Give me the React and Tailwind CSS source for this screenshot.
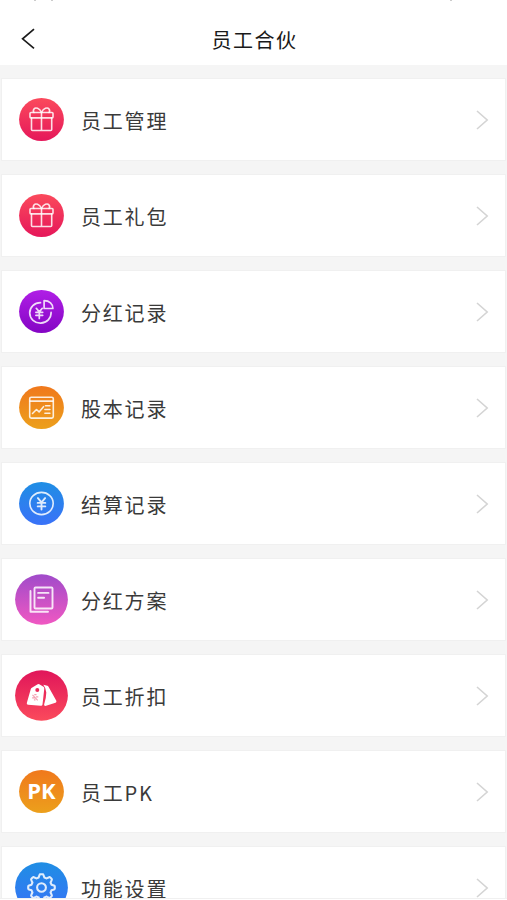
const stroke = {
  fill: "none",
  stroke: "#ffffff",
  strokeOpacity: 0.85,
  strokeWidth: 1.6,
  strokeLinecap: "round",
  strokeLinejoin: "round",
};

// All icons are drawn around the centre of the badge
function GiftIcon() {
  return (
    <g {...stroke}>
      <rect x="-11.5" y="-7" width="23" height="5.4" rx="1" />
      <path d="M-10 -1.6V10Q-10 11 -9 11H9.2Q10.2 11 10.2 10V-1.6M0 -7V11" />
      <path d="M0 -7C-2 -11.5 -6 -12.5 -7.5 -10.5C-8.5 -9 -8 -7.5 -7.5 -7M0 -7C2 -11.5 6 -12.5 7.5 -10.5C8.5 -9 8 -7.5 7.5 -7" />
    </g>
  );
}

function DividendIcon() {
  return (
    <g {...stroke} strokeWidth="1.7">
      <path d="M-1 -8.8A10.7 10.2 0 1 0 9.6 0.9" />
      <path d="M2.6 -10.8V-3H11.4C11.4 -7.5 8 -10.8 2.6 -10.8Z" />
      <path d="M-5.2 -3.2L-2.2 0.4L0.8 -3.2M-2.2 0.4V7M-5.6 0.8H1.2M-5.6 3.8H1.2" />
    </g>
  );
}

function StockIcon() {
  return (
    <g {...stroke}>
      <rect x="-11.8" y="-10.2" width="23.6" height="20.8" rx="1.5" />
      <path d="M-11.5 -6.4H11.5" />
      <path d="M-9 6L-5 2L-2.4 4.4L2 -0.8M4 -1.8H8.4M3.4 2H8.4M3.4 5.8H8.4" />
    </g>
  );
}

function SettleIcon() {
  return (
    <g {...stroke}>
      <ellipse rx="11.7" ry="11.1" />
      <path strokeWidth="1.9" d="M-3.6 -5.4L0 -1.2L3.6 -5.4M0 -1.2V6M-3.8 -0.6H3.8M-3.8 2.9H3.8" />
    </g>
  );
}

function PlanIcon() {
  return (
    <g {...stroke} strokeWidth="1.9">
      <rect x="-7" y="-12" width="18" height="21" rx="1" />
      <path d="M-11 -8.5V12.2H6.5M-3.4 -6.6H7M-3.4 -1.8H2.6" />
    </g>
  );
}

function DiscountIcon() {
  return (
    <g>
      <path
        fill="#ffffff"
        fillRule="evenodd"
        d="M-9.6 -7.8L-3.8 -11.2Q-3 -11.7 -2.2 -11.2L2 -8.8Q2.9 -8.2 2.8 -7L1 9Q0.8 10.4 -0.8 10.2L-13.4 9.3Q-15.1 9 -14.7 7.4L-10.7 -6.6Q-10.4 -7.4 -9.6 -7.8ZM-4.2 -7.4A2 2 0 1 0 -4.2 -3.4A2 2 0 1 0 -4.2 -7.4Z"
      />
      <path
        fill="#ffffff"
        d="M1.8 -10.8L5.8 -9.8Q6.6 -9.6 7 -8.8L14.8 5.2Q15.4 6.6 14 7.2L4.6 10.3Q2.4 10.8 2.6 9Q4.8 2.4 4.8 -3Q4.6 -7.4 1.8 -10.8Z"
      />
      <path fill="none" stroke="#f3a0b2" strokeWidth="1.2" d="M-9 -0.6L-3.8 4.8M-7.2 -0.8H-5M-9.4 2.4H-6.8M-5.6 1.4H-3.2M-7.6 4.4H-6" />
    </g>
  );
}

function PkIcon() {
  return (
    <text
      y="7.7"
      textAnchor="middle"
      fill="#ffffff"
      className="font-['Open_Sans','Noto_Sans',sans-serif] text-[22px] font-bold"
    >
      PK
    </text>
  );
}

// Eight rounded teeth, the first one pointing up
const gearPoints = Array.from({ length: 160 }, (_, i) => {
  const angle = (i / 160) * Math.PI * 2;
  const wave = Math.max(-1, Math.min(1, 1.6 * Math.cos(8 * angle)));
  const radius = 11.8 + 1.5 * wave;
  return `${(radius * Math.sin(angle)).toFixed(2)},${(-radius * Math.cos(angle)).toFixed(2)}`;
}).join(" ");

function GearIcon() {
  return (
    <g {...stroke} strokeWidth="2.1">
      <polygon points={gearPoints} />
      <ellipse rx="4.4" ry="4.2" />
    </g>
  );
}

const menu = [
  { label: "员工管理", from: "#fb4a5c", to: "#e5175a", Icon: GiftIcon },
  { label: "员工礼包", from: "#fb4a5c", to: "#e5175a", Icon: GiftIcon },
  { label: "分红记录", from: "#b01fe6", to: "#8405c4", Icon: DividendIcon },
  { label: "股本记录", from: "#f0781c", to: "#eca01c", Icon: StockIcon },
  { label: "结算记录", from: "#1f8ee4", to: "#3a72f8", Icon: SettleIcon },
  { label: "分红方案", from: "#a04bca", to: "#f058c2", Icon: PlanIcon, large: true },
  { label: "员工折扣", from: "#e0155a", to: "#fb4a5c", Icon: DiscountIcon, large: true },
  { label: "员工PK", from: "#f0781c", to: "#eca01c", Icon: PkIcon },
  { label: "功能设置", from: "#1f8ee4", to: "#3a72f8", Icon: GearIcon, large: true },
];

function Badge({ id, from, to, large, Icon }) {
  return (
    <svg viewBox="-26.5 -26.5 54 54" className="h-[54px] w-[54px] shrink-0">
      <defs>
        <linearGradient id={id} x1="0" y1="0" x2="0" y2="1">
          <stop offset="0" stopColor={from} />
          <stop offset="1" stopColor={to} />
        </linearGradient>
      </defs>
      <ellipse rx={large ? 26.4 : 22.4} ry={large ? 25.3 : 21.6} fill={`url(#${id})`} />
      <Icon />
    </svg>
  );
}

function MenuRow({ item, id }) {
  return (
    <div className="mx-px flex h-[83px] shrink-0 items-center border border-[#f0f0f0] bg-white pl-[13px] pr-4">
      <Badge id={id} {...item} />
      <span className="ml-3 flex-1 pt-[2px] text-[20px] leading-5 tracking-[1.8px] text-[#3a3a3a]">
        {item.label}
      </span>
      <svg viewBox="0 0 14 22" className="h-[22px] w-[14px]">
        <path d="M2 2L12.2 11L2 20" fill="none" stroke="#d4d4d4" strokeWidth="1.6" />
      </svg>
    </div>
  );
}

export default function App() {
  return (
    <div className="flex h-[900px] w-[507px] flex-col overflow-hidden bg-white font-['Noto_Sans_CJK_SC',sans-serif]">
      <header className="relative flex h-[65px] shrink-0 items-center justify-center bg-white pl-[2px] pt-[14px]">
        {/* lower edge of the status bar */}
        <div className="absolute left-[34px] top-0 h-px w-[2px] bg-[#cccccc]" />
        <div className="absolute left-[51px] top-0 h-px w-[2px] bg-[#cccccc]" />
        <div className="absolute left-[450px] top-0 h-px w-[2px] bg-[#cccccc]" />
        <button className="absolute left-[21px] top-[28px]" aria-label="返回">
          <svg viewBox="0 0 14 22" className="h-[22px] w-[14px]">
            <path d="M13 1.2L1.6 10.8L13 20.4" fill="none" stroke="#1c1c1c" strokeWidth="1.7" />
          </svg>
        </button>
        <h1 className="text-[20px] leading-7 tracking-[1.5px] text-[#1a1a1a]">员工合伙</h1>
      </header>

      <main className="flex h-[834px] flex-col gap-[13px] overflow-hidden border-b border-[#f0f0f0] bg-[#f5f5f5] pt-[13px]">
        {menu.map((item, i) => (
          <MenuRow key={item.label} id={`badge-${i}`} item={item} />
        ))}
      </main>
    </div>
  );
}
